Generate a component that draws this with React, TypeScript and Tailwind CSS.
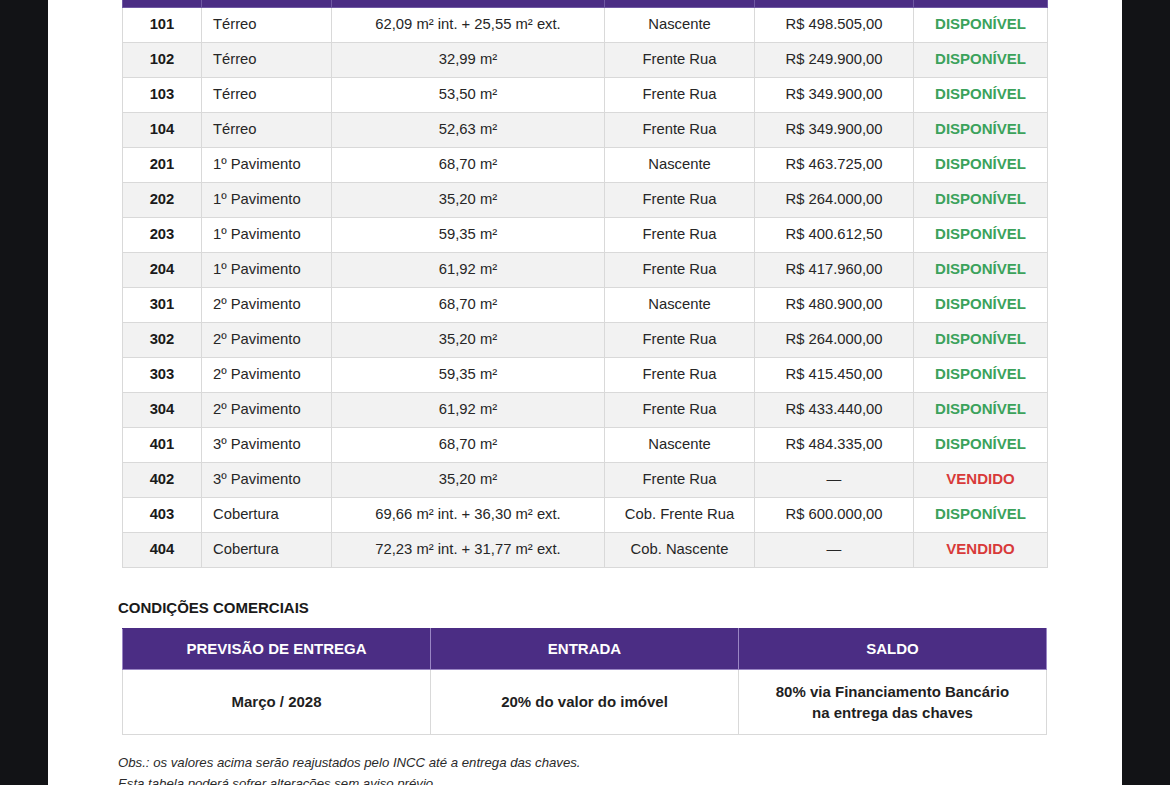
const units = [
  ['101', 'Térreo', '62,09 m² int. + 25,55 m² ext.', 'Nascente', 'R$ 498.505,00', 'DISPONÍVEL'],
  ['102', 'Térreo', '32,99 m²', 'Frente Rua', 'R$ 249.900,00', 'DISPONÍVEL'],
  ['103', 'Térreo', '53,50 m²', 'Frente Rua', 'R$ 349.900,00', 'DISPONÍVEL'],
  ['104', 'Térreo', '52,63 m²', 'Frente Rua', 'R$ 349.900,00', 'DISPONÍVEL'],
  ['201', '1º Pavimento', '68,70 m²', 'Nascente', 'R$ 463.725,00', 'DISPONÍVEL'],
  ['202', '1º Pavimento', '35,20 m²', 'Frente Rua', 'R$ 264.000,00', 'DISPONÍVEL'],
  ['203', '1º Pavimento', '59,35 m²', 'Frente Rua', 'R$ 400.612,50', 'DISPONÍVEL'],
  ['204', '1º Pavimento', '61,92 m²', 'Frente Rua', 'R$ 417.960,00', 'DISPONÍVEL'],
  ['301', '2º Pavimento', '68,70 m²', 'Nascente', 'R$ 480.900,00', 'DISPONÍVEL'],
  ['302', '2º Pavimento', '35,20 m²', 'Frente Rua', 'R$ 264.000,00', 'DISPONÍVEL'],
  ['303', '2º Pavimento', '59,35 m²', 'Frente Rua', 'R$ 415.450,00', 'DISPONÍVEL'],
  ['304', '2º Pavimento', '61,92 m²', 'Frente Rua', 'R$ 433.440,00', 'DISPONÍVEL'],
  ['401', '3º Pavimento', '68,70 m²', 'Nascente', 'R$ 484.335,00', 'DISPONÍVEL'],
  ['402', '3º Pavimento', '35,20 m²', 'Frente Rua', '—', 'VENDIDO'],
  ['403', 'Cobertura', '69,66 m² int. + 36,30 m² ext.', 'Cob. Frente Rua', 'R$ 600.000,00', 'DISPONÍVEL'],
  ['404', 'Cobertura', '72,23 m² int. + 31,77 m² ext.', 'Cob. Nascente', '—', 'VENDIDO'],
];

const cell = 'border border-[#d9d9d9] h-[35px] p-0';
const head = 'h-[7px] border-x border-b border-[#6f58a3] border-t-0 p-0';

export default function App() {
  return (
    <div
      className="flex h-[785px] w-[1170px] overflow-hidden bg-[#121316]"
      style={{ fontFamily: '"Liberation Sans", Arial, sans-serif' }}
    >
      <div className="ml-[48px] w-[1074px] overflow-hidden bg-white text-[#262626]">
        <div className="pl-[74px] pr-[75px]">
          {/* page is scrolled: only the bottom edge of the header band shows */}
          <table className="w-[925px] table-fixed border-collapse text-[14.8px]">
            <colgroup>
              <col className="w-[79px]" />
              <col className="w-[130px]" />
              <col className="w-[273px]" />
              <col className="w-[150px]" />
              <col className="w-[159px]" />
              <col className="w-[134px]" />
            </colgroup>
            <thead>
              <tr className="bg-[#4b2d84]">
                <th className={head} />
                <th className={head} />
                <th className={head} />
                <th className={head} />
                <th className={head} />
                <th className={head} />
              </tr>
            </thead>
            <tbody>
              {units.map((u, i) => (
                <tr key={u[0]} className={i % 2 === 1 ? 'bg-[#f2f2f2]' : 'bg-white'}>
                  <td className={`${cell} text-center font-bold text-[#1a1a1a]`}>{u[0]}</td>
                  <td className={`${cell} pl-[11px]`}>{u[1]}</td>
                  <td className={`${cell} text-center`}>{u[2]}</td>
                  <td className={`${cell} text-center`}>{u[3]}</td>
                  <td className={`${cell} text-center`}>{u[4]}</td>
                  <td
                    className={`${cell} text-center text-[15px] font-bold ${
                      u[5] === 'VENDIDO' ? 'text-[#d83a3a]' : 'text-[#3ba25b]'
                    }`}
                  >
                    {u[5]}
                  </td>
                </tr>
              ))}
            </tbody>
          </table>

          <h2 className="ml-[-4px] mt-[29px] text-[15px] font-bold text-[#1a1a1a]">
            CONDIÇÕES COMERCIAIS
          </h2>

          <table className="mt-[9px] w-[925px] table-fixed border-collapse text-[15px] font-bold text-[#1f1f1f]">
            <thead>
              <tr className="h-[41px] bg-[#4b2d84] text-white">
                <th className="border border-[#9a86c4] border-t-[#4b2d84]">PREVISÃO DE ENTREGA</th>
                <th className="border border-[#9a86c4] border-t-[#4b2d84]">ENTRADA</th>
                <th className="border border-[#9a86c4] border-t-[#4b2d84]">SALDO</th>
              </tr>
            </thead>
            <tbody>
              <tr className="h-[65px]">
                <td className="border border-[#d9d9d9] text-center">Março / 2028</td>
                <td className="border border-[#d9d9d9] text-center">20% do valor do imóvel</td>
                <td className="border border-[#d9d9d9] text-center leading-[21px]">
                  80% via Financiamento Bancário
                  <br />
                  na entrega das chaves
                </td>
              </tr>
            </tbody>
          </table>

          <div className="ml-[-4px] mt-[17px] text-[13.2px] italic leading-[21px] text-[#2a2a2a]">
            <p>Obs.: os valores acima serão reajustados pelo INCC até a entrega das chaves.</p>
            <p>Esta tabela poderá sofrer alterações sem aviso prévio.</p>
          </div>
        </div>
      </div>
    </div>
  );
}
